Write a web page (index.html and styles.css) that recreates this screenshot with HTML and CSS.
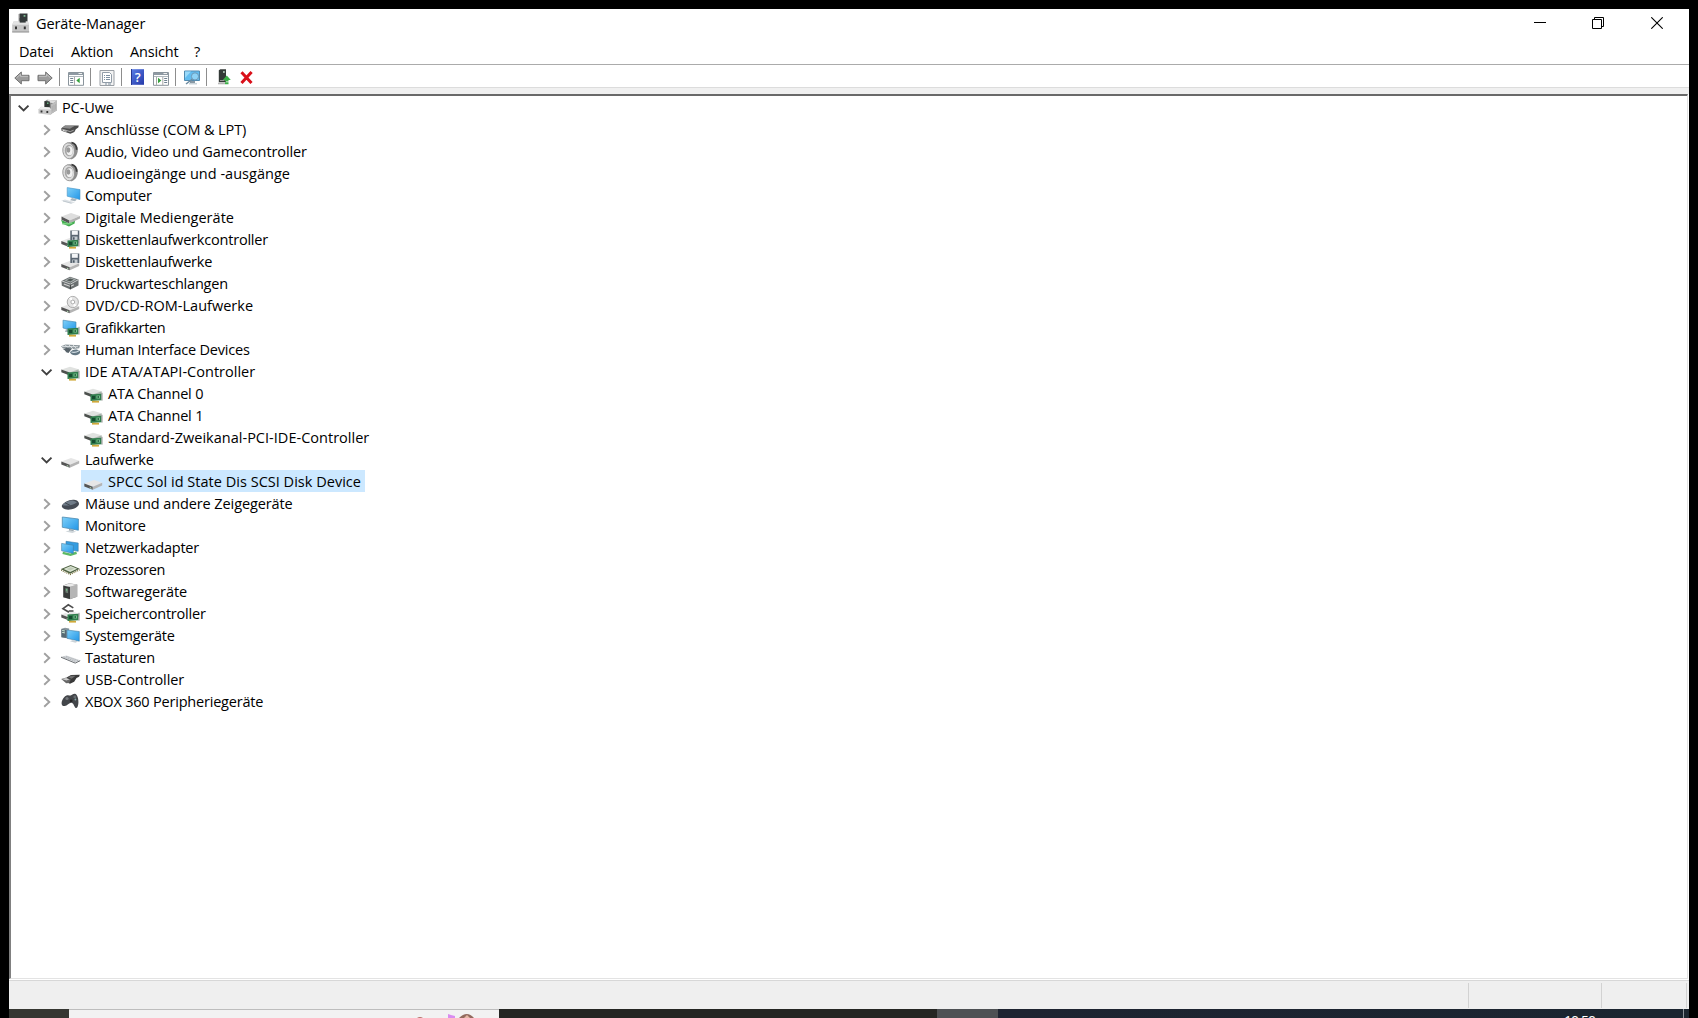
FILE: index.html
```html
<!DOCTYPE html>
<html lang="de">
<head>
<meta charset="utf-8">
<title>Geräte-Manager</title>
<link rel="stylesheet" href="styles.css">
</head>
<body>
<svg class="defs" width="0" height="0">
  <defs>
    <linearGradient id="blue" x1="0" y1="0" x2="1" y2="1"><stop offset="0" stop-color="#7fd0f8"/><stop offset="1" stop-color="#2196e8"/></linearGradient>
    <linearGradient id="help" x1="0" y1="0" x2="1" y2="1"><stop offset="0" stop-color="#5b7fe8"/><stop offset="1" stop-color="#2438a8"/></linearGradient>
  </defs>
  <symbol id="closed" viewBox="0 0 12 12"><path d="M3.2 1.2 8.3 6 3.2 10.8" fill="none" stroke="#a0a0a0" stroke-width="1.9"/></symbol>
  <symbol id="open" viewBox="0 0 12 12"><path d="M.7 3.6 5.6 8.5 10.5 3.6" fill="none" stroke="#404040" stroke-width="1.9"/></symbol>
  <symbol id="drive" viewBox="0 0 20 20">
    <path d="M0.3 12.5 10 9l8.2 2.7-9.4 4z" fill="#e6e6e6"/><path d="M0.3 12.5 8.8 15.7v3L0.3 15.6z" fill="#555"/><path d="M8.8 15.7 18.2 11.7v2.9l-9.4 4.1z" fill="#b4b4b4"/><path d="M5.8 16.6l1.6.6" stroke="#bfe8bf"/>
  </symbol>
  <symbol id="board" viewBox="0 0 20 20">
    <path d="M6.5 11.5 17.5 10.7v6.6L6.5 18z" fill="#2f7d4c"/><path d="M8 13h3.2v3H8z" fill="#164c30"/><path d="M12.5 12.5h3.5v3h-3.5z" fill="#79bf8d"/><path d="M13.5 13.3h1.5v1.5h-1.5z" fill="#164c30"/><path d="M8 18.7h7" stroke="#d0a93a" stroke-width="1.8"/><path d="M18 9.8v7.8" stroke="#8f8f8f" stroke-width="1"/>
  </symbol>
  <symbol id="floppy" viewBox="0 0 20 20">
    <path d="M9.3 2.5h9v9.5h-9z" fill="#5a6672"/><path d="M10.8 2.8h6v4h-6z" fill="#f4f6f8"/><path d="M11.3 8.5h5.2V12h-5.2z" fill="#c6cdd3"/><path d="M12 9.2h1.6v2.6H12z" fill="#4c5864"/>
  </symbol>
  <symbol id="pc" viewBox="0 0 20 20">
    <path d="M6.5 4.5 9 2.8l10 .8v9.6L13 17 6.5 12z" fill="#8c8c8c"/><path d="M9 2.8l10 .8-3.6 2.6-4-.6z" fill="#dedede"/><path d="M13 7.4l6-3.8v9.6L13 17z" fill="#bdbdbd"/><path d="M14.2 9v5.5M16 8v5.5M17.6 7v5.5" stroke="#a5a5a5" stroke-width=".6"/><path d="M6.5 4 11.8 4.6v6H6.5z" fill="#303633"/><path d="M9 5.6h1.5V7H9z" fill="#67b080"/><path d="M.5 12.2 3 9.8l8.5.6 1.7 2V18L.5 16.6z" fill="#c9c9c9"/><path d="M.5 12.2 3 9.8l8.5.6 1.7 2z" fill="#efefef"/><path d="M2.6 13.4h1.8v2H2.6zM8.4 13.9h1.8v2H8.4z" fill="#333"/>
  </symbol>
  <symbol id="port" viewBox="0 0 20 20">
    <path d="M.3 9.2 4 6.5l13.8.1-.5 2-2.5 1.6-1.4 2.8-4 1.8-8.9-3z" fill="#4c4c4c"/><path d="M1 8.8 4 6.8l9.5.1-4.6 2.8z" fill="#8b8b8b"/><path d="M1.2 10.2l8 2.4 3.5-1.4" stroke="#bbb" stroke-width=".8" fill="none"/><path d="M1.5 11.2l4 1.2" stroke="#d8d8d8"/>
  </symbol>
  <symbol id="audio" viewBox="0 0 20 20">
    <path d="M6 1.8C12 -.4 16.8 4 16.8 9c0 4.5-3 8.8-7 9.4z" fill="#8d8d8d"/><path d="M10.5 1.6c3 .2 5.4 3.4 5.2 7.2" stroke="#3b3b3b" stroke-width="1.7" fill="none"/><ellipse cx="7.7" cy="9.8" rx="5.9" ry="8" fill="#dedede" stroke="#8c8c8c" stroke-width=".8" transform="rotate(-8 7.7 9.8)"/><ellipse cx="8" cy="9.5" rx="4.2" ry="5.8" fill="#a6a6a6"/><ellipse cx="8.7" cy="9.7" rx="3.1" ry="4.5" fill="#f1f1f1"/><ellipse cx="7.4" cy="9" rx="1.9" ry="2.7" fill="#999"/>
  </symbol>
  <symbol id="computer" viewBox="0 0 20 20">
    <path d="M6.2 2.6 19 4.6v10L6.2 11.2z" fill="url(#blue)" stroke="#4a94c4" stroke-width=".6"/><path d="M11 13l5 1.5-2 1.8-5-1z" fill="#a9b5bd"/><path d="M.2 15.8 4 14.4l10 2.8-3.6 1.6z" fill="#dce1e5"/><path d="M2 16l8.4 2.2" stroke="#b3bdc4" stroke-width=".7"/>
  </symbol>
  <symbol id="media" viewBox="0 0 20 20">
    <path d="M0 12.8l8 3.5v3.2L1.6 16.8zM8 16.3l6-2.8-.4 3L8 19.5z" fill="#42ad50"/><path d="M.5 9.5 10 6l9 3-10.5 4.4z" fill="#dedede"/><path d="M.5 9.5 8.5 13.4v3L.5 12.7z" fill="#555"/><path d="M8.5 13.4 19 9v2.5L8.5 16.4z" fill="#b1b1b1"/><path d="M1.3 16.8h7l3-1" stroke="#79cf80" stroke-width="1.5" fill="none"/>
  </symbol>
  <symbol id="floppyctl" viewBox="0 0 20 20"><use href="#drive" y="-.5"/><use href="#floppy" y="-1"/><use href="#board"/></symbol>
  <symbol id="floppydrv" viewBox="0 0 20 20"><use href="#drive" y=".5"/><use href="#floppy"/></symbol>
  <symbol id="printer" viewBox="0 0 20 20">
    <path d="M.5 8 9 3.8l8.5 2.6v6.1L9.4 16.5.8 12.7z" fill="#6a6f70"/><path d="M3.6 7.4 9.2 4.6l6 1.9-5.6 3z" fill="#aab0b0"/><path d="M5.5 7.3l3.7-1.8 3.6 1.1-3.5 1.9z" fill="#515a58"/><path d="M1 8l8.4 3.1 8.1-4.5" stroke="#c9cccc" fill="none"/><path d="M2.8 10.9l6.6 2.6 3.4-1.8" stroke="#d5d5d5" stroke-width="1.1" fill="none"/><path d="M9.4 11.6v4.6" stroke="#3c4040"/>
  </symbol>
  <symbol id="dvd" viewBox="0 0 20 20">
    <use href="#drive" y="-.5"/><circle cx="11.8" cy="7" r="5.6" fill="#e4e4e4" stroke="#a6a6a6" stroke-width=".9"/><path d="M11.8 7 8 3.5 10.5 2zM11.8 7l3.8 3.5-2.8 1.5z" fill="#fff"/><circle cx="11.8" cy="7" r="1.9" fill="#fff" stroke="#a5a5a5" stroke-width=".9"/>
  </symbol>
  <symbol id="gpu" viewBox="0 0 20 20"><path d="M2 3.2 15 5v9.3L2 11z" fill="url(#blue)" stroke="#3f83ad" stroke-width=".6"/><path d="M5 12l3 1-1 2H4z" fill="#a8b3bb"/><use href="#board"/></symbol>
  <symbol id="hid" viewBox="0 0 20 20">
    <path d="M0 7.3 4.5 5.5l14.5.8-.8 3L8 10.5 2 9.5z" fill="#8d979c"/><path d="M1 7.4l16 .3M4 5.8l4 4M8 6l4 4M12 6l3 3" stroke="#e6eaec" stroke-width=".8"/><path d="M.5 11.8 6 8.5l4.5 1.4-3 4.2z" fill="#58636a"/><path d="M.5 10.8l3 .3 2 2.4H.5z" fill="#fff"/><path d="M9 13.3c2-3 7-4 10-1.2.6 2.5-1.2 3.8-4 4.2-3 .3-5.2-.8-6-3z" fill="#637783"/><path d="M10.5 13c2.5.8 5 .3 7.6-1.2" stroke="#d2dde4" stroke-width="1.1" fill="none"/>
  </symbol>
  <symbol id="ide" viewBox="0 0 20 20">
    <path d="M.5 8.5 9 5.8l8.7 2.4-8 4z" fill="#e0e2e0"/><path d="M.3 8.5 8.7 11.5v3L.3 11.2z" fill="#4c504d"/><path d="M8 11.8l9.7-3.6v3L8 14z" fill="#aab5ad"/><use href="#board"/>
  </symbol>
  <symbol id="mouse" viewBox="0 0 20 20">
    <path d="M.8 12.8C1.8 9.7 8 6.2 13 6.7c3.5.3 5.7 2.6 4.9 4.8-1.3 3.5-7.2 5.2-10.6 5.2-3.5 0-6.8-1.7-6.5-3.9z" fill="#454b55"/><path d="M1.6 12.4c1-2.3 5.8-4.9 10.4-4.8l4 1.6c-3.3 2.6-8 4-14.4 3.2z" fill="#6f7b88"/><path d="M4.2 9.9l5 2.5" stroke="#414750"/>
  </symbol>
  <symbol id="monitor" viewBox="0 0 20 20">
    <path d="M1.3 2 17.4 4v11.2L1.3 12.3z" fill="url(#blue)" stroke="#4c8ab0" stroke-width=".8"/><path d="M8 14l4.6.8v1.7H8z" fill="#909ba3"/><path d="M4.5 16.4 8.8 15.2l6.4 1.3-3.8 1.6z" fill="#cfd6da"/>
  </symbol>
  <symbol id="network" viewBox="0 0 20 20">
    <path d="M2 14.8l7.2 1.8 6-2 .8 2.3-6.5 2L1.4 17z" fill="#5dba65"/><path d="M5 4.3 17.2 6v8.3L5 12z" fill="#329ce1" stroke="#397ba6" stroke-width=".6"/><path d="M.6 6.4 12.4 8.2v8.2L.6 13.8z" fill="url(#blue)" stroke="#4380a5" stroke-width=".6"/>
  </symbol>
  <symbol id="cpu" viewBox="0 0 20 20">
    <path d="M-.2 10.2 9.7 6l9 3.8-9.6 5z" fill="#4e6142"/><path d="M2.6 10 9.7 7.1l6.5 2.6-7 3.3z" fill="#dbe4d3"/><path d="M5.4 9.9 9.7 8.2l3.6 1.4-4 1.8z" fill="#c0ccb8"/><path d="M0 11.1l9.1 4.4 9.6-4.7" stroke="#716c35" stroke-width="1.2" stroke-dasharray="1 1" fill="none"/>
  </symbol>
  <symbol id="software" viewBox="0 0 20 20">
    <path d="M2.2 4.5 8 2.2l8.3 1.3v12.2L9 18.3l-6.8-2z" fill="#888"/><path d="M2.4 4.8 9 5.8v12.3l-6.6-1.9z" fill="#373a39"/><path d="M9 5.8l7.1-2.1v12L9 18.1z" fill="#b5b5b5"/><path d="M2.4 4.8 8 2.5l8 1.2L9 5.8z" fill="#ececec"/><path d="M4.4 7l2.7.5v4.7l-2.7-.6z" fill="#6b7a70"/><path d="M5 8l1 .2v1.6l-1-.2z" fill="#66d084"/>
  </symbol>
  <symbol id="storage" viewBox="0 0 20 20">
    <use href="#drive" y="-1"/><path d="M8.2 9.8 2.4 5.5 7.6 1.4l4.8 3.5" fill="none" stroke="#fff" stroke-width="4"/><path d="M8 9.3 2 5.6 7.3 1.8l5 3.1M12.5 8H7.7" fill="none" stroke="#4d4d4d" stroke-width="1.7"/><use href="#board"/>
  </symbol>
  <symbol id="system" viewBox="0 0 20 20">
    <path d="M.4 3.8 4 2.7l4.2.8v10l-7.8-1z" fill="#8b979e"/><path d="M.4 4.2l5 .8v8L.4 12z" fill="#566a74"/><path d="M1.2 5.5l2.7.5M1.2 7.4l2.7.5" stroke="#d5f0dc"/><path d="M6 5 18.3 6.5v9.7L6 13.3z" fill="url(#blue)" stroke="#4380a5" stroke-width=".6"/><path d="M9 16.2l3-1.1 5 1.3-2.6 1.3z" fill="#cbd2d7"/>
  </symbol>
  <symbol id="keyboard" viewBox="0 0 20 20">
    <path d="M-.5 9.8 5.5 8.6l13.7 4.6-5 2.4z" fill="#d3d6d9"/><path d="M-.5 10l14.7 6.1 5-2.4" fill="none" stroke="#6c7074" stroke-width="1"/><path d="M2.5 9.8l12.3 4.7M5.2 9.4 17 13.6" stroke="#999ea3" stroke-width=".6" stroke-dasharray="1.5 .7"/>
  </symbol>
  <symbol id="usb" viewBox="0 0 20 20">
    <path d="M6 8.2 10 6l8.8-.3-.7 2.1-2.6 1.3-2.3 3.6-4.2 2.1L3.5 12z" fill="#393939"/><path d="M7 8.2l3.2-1.5 4.4.1-4 3z" fill="#707070"/><path d="M.2 9.9 5.3 8.4l4.5 2.2-1.6 3.5-3 .1z" fill="#686868"/><path d="M.8 10l4.4-1.1 3.2 1.6-3 1.1z" fill="#ccc"/>
  </symbol>
  <symbol id="gamepad" viewBox="0 0 20 20">
    <path d="M.6 12.5C.6 9 3.5 5 6 4.3c1.8-.5 2.2.3 3.6.1 1.5-.3 2-1.6 4.2-1.7C16.3 2.6 17.7 8 17.4 12c-.2 3.3-1.2 5.2-2.5 5-1.6-.3-2-4.6-4.2-5.2-2.2-.5-4.4 3-7 3.3-1.8.2-3.1-.9-3.1-2.6z" fill="#43464a"/><circle cx="6" cy="7.5" r="1.6" fill="#74787c"/><circle cx="10.2" cy="9.8" r="1.4" fill="#222"/><circle cx="13.8" cy="5.9" r="1.4" fill="#676d72"/><circle cx="14.4" cy="8.5" r=".9" fill="#8aa"/>
  </symbol>
  <symbol id="appicon" viewBox="0 0 18 20">
    <path d="M8 .5h7.5v10H8z" fill="#343a3a"/><path d="M6.6 1 8 .5v10H6.6z" fill="#888"/><path d="M11.6 2h1.8v1.8h-1.8z" fill="#7cb890"/><path d="M1.6 8.5H16l1 3.5v7.4H.2V12z" fill="#c5c5c5"/><path d="M1.6 8.5H16l1 3.3H.2z" fill="#e3e3e3"/><path d="M7.7 5h6v4.6h-6z" fill="#343a3a"/><path d="M3 13.5h2v2.8H3zM11.8 13.5h2v2.8h-2z" fill="#333"/><path d="M.2 18.9h17" stroke="#999"/>
  </symbol>
  <symbol id="panel" viewBox="0 0 16 14">
    <path d="M.5 .5h15v12.8H.5z" fill="#fff" stroke="#8a949c"/><path d="M.5 1h15v2H.5z" fill="#8f9aa3"/><path d="M10.5 1.5h3.5" stroke="#eee"/><path d="M1 4.5h14" stroke="#b0b8be"/>
  </symbol>
</svg>

<main class="window">
  <header class="titlebar">
    <svg class="app-icon"><use href="#appicon"/></svg>
    <h1 class="title">Geräte-Manager</h1>
    <div class="controls">
      <svg class="control" viewBox="0 0 12 12"><path d="M0 5.5h12" stroke="#000"/></svg>
      <svg class="control restore" viewBox="0 0 12 12"><path d="M.5 2.5h9v9h-9zM2.5 2V.5h9v9H10" fill="none" stroke="#000"/></svg>
      <svg class="control" viewBox="0 0 12 12"><path d="M.3.3l11.4 11.4M11.7.3.3 11.7" stroke="#000" stroke-width="1.1"/></svg>
    </div>
  </header>
  <nav class="menubar"><span class="m-file">Datei</span><span class="m-action">Aktion</span><span class="m-view">Ansicht</span><span>?</span></nav>
  <div class="toolbar">
    <svg class="tool" viewBox="0 0 16 14"><path d="M.8 7 7.3 1v3.3H15v5.4H7.3V13z" fill="#9c9c9c" stroke="#707070"/><path d="M2.6 6.8 6.5 3.2v2.1H14" stroke="#c4c4c4" fill="none"/></svg>
    <svg class="tool forward" viewBox="0 0 16 14"><path d="M15.2 7 8.7 1v3.3H1v5.4h7.7V13z" fill="#9c9c9c" stroke="#707070"/><path d="M13.4 6.8 9.5 3.2v2.1H2" stroke="#c4c4c4" fill="none"/></svg>
    <i class="sep s1"></i>
    <svg class="tool low" viewBox="0 0 16 14"><use href="#panel"/><path d="M2.2 6.5h3M2.2 8.5h3M2.2 10.5h3" stroke="#6f8191"/><path d="M6.5 5v8" stroke="#aaa"/><path d="M11.7 5.8v5.4L8.3 8.5z" fill="#36a13c"/></svg>
    <i class="sep s2"></i>
    <svg class="tool tall" viewBox="0 0 16 16"><path d="M1 .5h14v15H1z" fill="#f3f3f3" stroke="#9a9fa5"/><path d="M3.5 2.5h7l2 2v8h-9z" fill="#fff" stroke="#929da8"/><path d="M5 5.5h1M7 5.5h4M5 7.5h1M7 7.5h4M5 9.5h1M7 9.5h4M6 14h2M9 14h3" stroke="#7d8fa0"/></svg>
    <i class="sep s3"></i>
    <svg class="tool help" viewBox="0 0 13 16"><path d="M0 .2h13v15.6H0z" fill="url(#help)"/><path d="M.5 0v16" stroke="#273791"/><text x="6.8" y="12.5" text-anchor="middle" class="help-mark">?</text></svg>
    <svg class="tool low t5" viewBox="0 0 16 14"><use href="#panel"/><path d="M11.2 6.5h3M11.2 8.5h3M11.2 10.5h3" stroke="#6f8191"/><path d="M3.5 5v8M9.8 5v8" stroke="#aaa"/><path d="M5 5.8v5.4l3.4-2.7z" fill="#36a13c"/></svg>
    <i class="sep s4"></i>
    <svg class="tool tall t6" viewBox="0 0 16 16"><path d="M.5 1h15v9.5H.5z" fill="#62bdf0" stroke="#528bb0"/><path d="M1 1.5h6L1 8z" fill="#9adafa"/><path d="M6 11h5v2H6z" fill="#8999a5"/><path d="M5 13.8h8" stroke="#bcc8d0" stroke-width="1.2"/><circle cx="11" cy="6.4" r="3.6" fill="#8ed3f6" stroke="#6d9ab8"/><path d="M8.4 9.2 2 14" stroke="#6d8ba0" stroke-width="1.5"/></svg>
    <i class="sep s5"></i>
    <svg class="tool update" viewBox="0 0 13 16"><path d="M.8 1.2 2.3.3H8v13H.8z" fill="#343a37"/><path d="M5 2h1.8v2H5z" fill="#9fb3a5"/><path d="M2 11.5h4.5" stroke="#999"/><path d="M0 14.5h7" stroke="#b5b5b5" stroke-width="1.6"/><path d="M8.8 6.5 12.8 11h-2.3v1.5H7V11H4.8zM7 13.3h3.5v1.9H7z" fill="#3cae48"/></svg>
    <svg class="tool remove" viewBox="0 0 13 13"><path d="M1.5 1.3 11.5 12M11.6 1 1.5 12" stroke="#d9101a" stroke-width="3"/></svg>
  </div>
  <section class="tree">
    <div class="row root"><svg class="chev"><use href="#open"/></svg><svg class="icon"><use href="#pc"/></svg><span class="label mid">PC-Uwe</span></div>
    <div class="row"><svg class="chev"><use href="#closed"/></svg><svg class="icon"><use href="#port"/></svg><span class="label mid">Anschlüsse (COM &amp; LPT)</span></div>
    <div class="row"><svg class="chev"><use href="#closed"/></svg><svg class="icon"><use href="#audio"/></svg><span class="label mid">Audio, Video und Gamecontroller</span></div>
    <div class="row"><svg class="chev"><use href="#closed"/></svg><svg class="icon"><use href="#audio"/></svg><span class="label loose">Audioeingänge und -ausgänge</span></div>
    <div class="row"><svg class="chev"><use href="#closed"/></svg><svg class="icon"><use href="#computer"/></svg><span class="label">Computer</span></div>
    <div class="row"><svg class="chev"><use href="#closed"/></svg><svg class="icon"><use href="#media"/></svg><span class="label loose">Digitale Mediengeräte</span></div>
    <div class="row"><svg class="chev"><use href="#closed"/></svg><svg class="icon"><use href="#floppyctl"/></svg><span class="label">Diskettenlaufwerkcontroller</span></div>
    <div class="row"><svg class="chev"><use href="#closed"/></svg><svg class="icon"><use href="#floppydrv"/></svg><span class="label">Diskettenlaufwerke</span></div>
    <div class="row"><svg class="chev"><use href="#closed"/></svg><svg class="icon"><use href="#printer"/></svg><span class="label">Druckwarteschlangen</span></div>
    <div class="row"><svg class="chev"><use href="#closed"/></svg><svg class="icon"><use href="#dvd"/></svg><span class="label loose">DVD/CD-ROM-Laufwerke</span></div>
    <div class="row"><svg class="chev"><use href="#closed"/></svg><svg class="icon"><use href="#gpu"/></svg><span class="label tight">Grafikkarten</span></div>
    <div class="row"><svg class="chev"><use href="#closed"/></svg><svg class="icon"><use href="#hid"/></svg><span class="label">Human Interface Devices</span></div>
    <div class="row"><svg class="chev"><use href="#open"/></svg><svg class="icon"><use href="#ide"/></svg><span class="label loose">IDE ATA/ATAPI-Controller</span></div>
    <div class="row leaf"><svg class="icon"><use href="#ide"/></svg><span class="label">ATA Channel 0</span></div>
    <div class="row leaf"><svg class="icon"><use href="#ide"/></svg><span class="label">ATA Channel 1</span></div>
    <div class="row leaf"><svg class="icon"><use href="#ide"/></svg><span class="label loose">Standard-Zweikanal-PCI-IDE-Controller</span></div>
    <div class="row"><svg class="chev"><use href="#open"/></svg><svg class="icon"><use href="#drive"/></svg><span class="label">Laufwerke</span></div>
    <div class="row leaf selected"><svg class="icon"><use href="#drive"/></svg><span class="label loose">SPCC Sol id State Dis SCSI Disk Device</span></div>
    <div class="row"><svg class="chev"><use href="#closed"/></svg><svg class="icon"><use href="#mouse"/></svg><span class="label mid">Mäuse und andere Zeigegeräte</span></div>
    <div class="row"><svg class="chev"><use href="#closed"/></svg><svg class="icon"><use href="#monitor"/></svg><span class="label">Monitore</span></div>
    <div class="row"><svg class="chev"><use href="#closed"/></svg><svg class="icon"><use href="#network"/></svg><span class="label">Netzwerkadapter</span></div>
    <div class="row"><svg class="chev"><use href="#closed"/></svg><svg class="icon"><use href="#cpu"/></svg><span class="label tight">Prozessoren</span></div>
    <div class="row"><svg class="chev"><use href="#closed"/></svg><svg class="icon"><use href="#software"/></svg><span class="label mid">Softwaregeräte</span></div>
    <div class="row"><svg class="chev"><use href="#closed"/></svg><svg class="icon"><use href="#storage"/></svg><span class="label">Speichercontroller</span></div>
    <div class="row"><svg class="chev"><use href="#closed"/></svg><svg class="icon"><use href="#system"/></svg><span class="label">Systemgeräte</span></div>
    <div class="row"><svg class="chev"><use href="#closed"/></svg><svg class="icon"><use href="#keyboard"/></svg><span class="label tight">Tastaturen</span></div>
    <div class="row"><svg class="chev"><use href="#closed"/></svg><svg class="icon"><use href="#usb"/></svg><span class="label mid">USB-Controller</span></div>
    <div class="row"><svg class="chev"><use href="#closed"/></svg><svg class="icon"><use href="#gamepad"/></svg><span class="label">XBOX 360 Peripheriegeräte</span></div>
  </section>
  <footer class="statusbar"><div class="pane main-pane"></div><div class="pane mid-pane"></div><div class="pane end-pane"></div></footer>
</main>
<div class="taskbar">
  <div class="start"></div>
  <div class="search"><svg class="doodle" viewBox="0 0 70 8"><path d="M1 8q3-2 6 0z" fill="#b5706a"/><path d="M32 4l3 1 4 1v2h-7z" fill="#d98cf0"/><path d="M43 8q8-8 15 0z" fill="#936a5e"/><path d="M48 8l3-3 3 3z" fill="#e6b8a6"/></svg></div>
  <div class="apps"></div>
  <div class="active-app"></div>
  <div class="tray"><span class="clock">10:50</span></div>
  <div class="peek"></div>
</div>
</body>
</html>
```
FILE: styles.css
```css
* { box-sizing: border-box; }

body {
  margin: 0;
  padding: 9px 9px 0;
  width: 1698px;
  height: 1018px;
  overflow: hidden;
  background: #000;
  color: #000;
  font-family: "Open Sans", "Noto Sans", sans-serif;
  font-size: 14.5px;
}

.defs { position: absolute; }
svg { display: block; flex: none; }

.window {
  display: flex;
  flex-direction: column;
  width: 1680px;
  height: 1000px;
  background: #fff;
}

.titlebar {
  display: flex;
  align-items: flex-start;
  height: 29px;
  padding-left: 3px;
}
.app-icon { width: 18px; height: 20px; margin-top: 4px; }
.title {
  margin: 5px 0 0 6px;
  font-size: 14.5px;
  line-height: 20px;
  font-weight: 400;
  letter-spacing: -0.1px;
}
.controls { display: flex; gap: 46px; margin: 8px 26px 0 auto; }
.control { width: 12px; height: 12px; }
.restore { margin-right: 1px; }

.menubar {
  display: flex;
  height: 27px;
  padding: 4px 0 0 10px;
  line-height: 20px;
  letter-spacing: -0.15px;
  border-bottom: 1px solid #ababab;
}
.menubar span { flex: none; white-space: nowrap; }
.m-file { width: 52px; }
.m-action { width: 59px; }
.m-view { width: 64px; }

.toolbar {
  display: flex;
  height: 29px;
  padding: 5px 0 0 5px;
  background: linear-gradient(#fff 22px, #dcdcdc 22px, #dcdcdc 23px, #f0f0f0 23px);
}
.tool { width: 16px; height: 14px; margin-top: 1px; }
.forward { margin-left: 7px; }
.low { margin-top: 2px; }
.tall { height: 16px; margin-top: 0; }
.help { width: 13px; height: 16px; margin-top: -1px; overflow: visible; }
.help-mark { font: 600 13px "Open Sans", sans-serif; fill: #fff; }
.t5 { margin-left: 9px; }
.update { width: 13px; height: 16px; margin-top: -1px; }
.remove { width: 13px; height: 13px; margin: 1px 0 0 9px; }
.sep { flex: none; width: 1px; height: 18px; background: #8d8d8d; }
.s1 { margin: -2px 8px 0 6px; }
.s2 { margin: -2px 8px 0 6px; }
.s3 { margin: -2px 9px 0 6px; }
.s4 { margin: -2px 8px 0 6px; }
.s5 { margin: -2px 11px 0 6px; }

.tree {
  height: 885px;
  margin-right: 1px;
  border: solid;
  border-width: 2px 1px 1px 2px;
  border-color: #696969 #e3e3e3 #e3e3e3 #808080;
}
.row {
  display: flex;
  align-items: flex-start;
  width: max-content;
  height: 22px;
  padding-left: 30px;
}
.row.root { padding-left: 7px; }
.row.leaf { margin-left: 70px; padding-left: 3px; }
.row.selected { background: #cce8ff; width: 284px; }
.chev { width: 12px; height: 12px; margin: 6px 8px 0 0; }
.icon { width: 20px; height: 20px; margin-top: 1px; overflow: visible; }
.label {
  margin-left: 4px;
  line-height: 24px;
  letter-spacing: -0.2px;
  white-space: pre;
}
.label.mid { letter-spacing: -0.1px; }
.label.loose { letter-spacing: 0.02px; }
.label.tight { letter-spacing: -0.35px; }

.statusbar {
  display: flex;
  height: 29px;
  margin-top: 1px;
  padding: 2px 2px 1px 0;
  background: #efefef;
  border-top: 1px solid #d7d7d7;
}
.pane { border-right: 1px solid #d2d2d2; }
.main-pane { width: 1460px; }
.mid-pane { width: 133px; }
.end-pane { width: 85px; }

.taskbar {
  display: flex;
  width: 1680px;
  height: 9px;
  overflow: hidden;
  background: #1c2630;
}
.taskbar > div { flex: none; }
.start { width: 60px; background: #353631; }
.search {
  width: 430px;
  padding-left: 347px;
  background: #f2f2f2;
  border-top: 1px solid #bdbdbd;
}
.doodle { width: 70px; height: 8px; }
.apps { width: 438px; background: #252623; }
.active-app { width: 61px; background: #4e5154; }
.tray { width: 685px; padding-left: 566px; background: linear-gradient(90deg, #1e2431, #1b2530); }
.clock {
  display: block;
  margin-top: 2px;
  color: #fff;
  font-size: 14px;
  line-height: 20px;
  letter-spacing: -0.9px;
}
.peek { width: 6px; border-left: 1px solid #8d949a; }
```
